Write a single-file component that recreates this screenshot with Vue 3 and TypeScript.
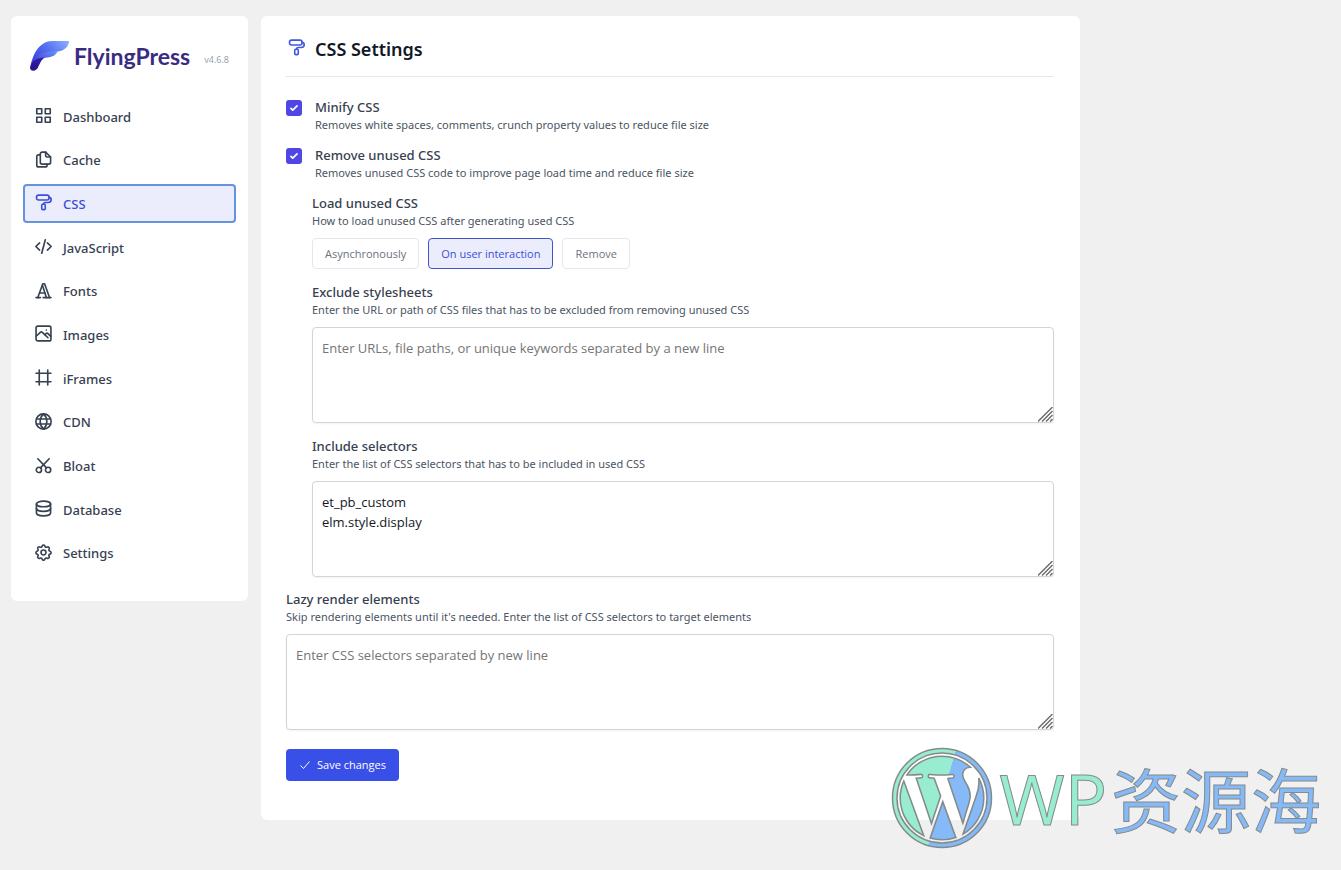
<script setup lang="ts">
import { ref } from 'vue'

interface NavItem {
  name: string
  paths: string[]
}

const roller = [
  'M5 1.500h12a2.800 2.800 0 0 1 2.800 2.800v1.400a2.800 2.800 0 0 1-2.800 2.800H5a2.800 2.800 0 0 1-2.800-2.800V4.300A2.800 2.800 0 0 1 5 1.500z',
  'M19.800 4.500c2.200.2 3.200 1.700 3 4-.2 2.400-1.700 3.500-4.300 3.500h-4c-1.700 0-2.500 1-2.500 2.500',
  'M11 14.500h2a1.500 1.500 0 0 1 1.500 1.500v4.500a1.500 1.500 0 0 1-1.500 1.500h-2a1.500 1.500 0 0 1-1.500-1.500V16a1.500 1.500 0 0 1 1.500-1.500z',
]

const items: NavItem[] = [
  {
    name: 'Dashboard',
    paths: ['M2.500 2.500h7v7h-7z', 'M14.500 2.500h7v7h-7z', 'M2.500 14.500h7v7h-7z', 'M14.500 14.500h7v7h-7z'],
  },
  {
    name: 'Cache',
    paths: [
      'M15 1.500H10a2.500 2.500 0 0 0-2.500 2.500v12a2.500 2.500 0 0 0 2.500 2.500h9.500A2.500 2.500 0 0 0 22 16V8.500z',
      'M15 1.500v5a2 2 0 0 0 2 2h5',
      'M7.500 5.500H5A2.500 2.500 0 0 0 2.500 8v12A2.500 2.500 0 0 0 5 22.500h9.500a2.500 2.500 0 0 0 2.500-2.500v-1.500',
    ],
  },
  { name: 'CSS', paths: roller },
  { name: 'JavaScript', paths: ['M6.500 7 1.200 12l5.300 5', 'M17.500 7l5.300 5-5.300 5', 'M14.500 2.500l-5 19'] },
  {
    name: 'Fonts',
    paths: ['M1.500 22h6', 'M11.500 22h11', 'M4 22 11 2.500h2.500L20.500 22', 'M10.500 4.500 16 22', 'M6.500 15.500h7.500'],
  },
  {
    name: 'Images',
    paths: [
      'M4 1.500h16A2.500 2.500 0 0 1 22.500 4v16a2.500 2.500 0 0 1-2.500 2.500H4A2.500 2.500 0 0 1 1.500 20V4A2.500 2.500 0 0 1 4 1.500z',
      'M2 15.500l5.500-5.200a2 2 0 0 1 2.800 0l8 7.700',
      'M14 13.500l1.500-1.300a2 2 0 0 1 2.800 0l4 3.800',
      'M16 7h.1',
    ],
  },
  { name: 'iFrames', paths: ['M6 1.500v21', 'M18 1.500v21', 'M1.500 6h21', 'M1.500 18h21'] },
  {
    name: 'CDN',
    paths: [
      'M12 1.200a10.800 10.800 0 1 0 0 21.600 10.800 10.800 0 0 0 0-21.600z',
      'M12 1.200c-6.300 6-6.300 15.600 0 21.600 6.300-6 6.300-15.600 0-21.600z',
      'M2.200 8.500h19.600',
      'M2.200 15.500h19.600',
    ],
  },
  {
    name: 'Bloat',
    paths: [
      'M5.500 14.500a3.700 3.700 0 1 0 0 7.400 3.700 3.700 0 0 0 0-7.400z',
      'M18.500 14.500a3.700 3.700 0 1 0 0 7.400 3.700 3.700 0 0 0 0-7.400z',
      'M4 2.500l12.300 12.800',
      'M20 2.500 7.700 15.300',
    ],
  },
  {
    name: 'Database',
    paths: [
      'M12 1.500c5.500 0 10 1.800 10 4s-4.500 4-10 4-10-1.800-10-4 4.500-4 10-4z',
      'M2 5.500v13c0 2.200 4.500 4 10 4s10-1.800 10-4v-13',
      'M2 12c0 2.200 4.500 4 10 4s10-1.800 10-4',
    ],
  },
  {
    name: 'Settings',
    paths: [
      'M12 8.500a3.500 3.500 0 1 0 0 7 3.500 3.500 0 0 0 0-7z',
      'M10.200 2.600a2 2 0 0 1 3.600 0l.5 1a1.800 1.800 0 0 0 2.200.9l1.100-.4a2 2 0 0 1 2.500 2.500l-.4 1.100a1.800 1.800 0 0 0 .9 2.200l1 .5a2 2 0 0 1 0 3.600l-1 .5a1.800 1.800 0 0 0-.9 2.200l.4 1.100a2 2 0 0 1-2.500 2.500l-1.100-.4a1.800 1.800 0 0 0-2.200.9l-.5 1a2 2 0 0 1-3.600 0l-.5-1a1.800 1.800 0 0 0-2.200-.9l-1.100.4a2 2 0 0 1-2.500-2.500l.4-1.100a1.800 1.800 0 0 0-.9-2.200l-1-.5a2 2 0 0 1 0-3.600l1-.5a1.800 1.800 0 0 0 .9-2.200l-.4-1.100a2 2 0 0 1 2.500-2.500l1.100.4a1.800 1.800 0 0 0 2.200-.9z',
    ],
  },
]

const active = ref('CSS')
const minify = ref(true)
const removeUnused = ref(true)
const modes = ['Asynchronously', 'On user interaction', 'Remove']
const mode = ref('On user interaction')
const exclude = ref('')
const include = ref('et_pb_custom\nelm.style.display')
const lazy = ref('')
</script>

<template>
  <div class="page">
    <aside class="card sidebar">
      <div class="brand">
        <svg class="bird" viewBox="0 0 40 30" aria-hidden="true">
          <defs>
            <linearGradient id="wing" x1="0" y1="0.6" x2="1" y2="0">
              <stop offset="0" stop-color="#3a43e0" />
              <stop offset="0.5" stop-color="#5876f3" />
              <stop offset="1" stop-color="#8fb0fd" />
            </linearGradient>
            <linearGradient id="mid" x1="0" y1="1" x2="1" y2="0">
              <stop offset="0" stop-color="#2f2bd0" />
              <stop offset="1" stop-color="#6d94fa" />
            </linearGradient>
            <linearGradient id="tail" x1="0" y1="1" x2="1" y2="0">
              <stop offset="0" stop-color="#2c0f86" />
              <stop offset="1" stop-color="#3420b4" />
            </linearGradient>
          </defs>
          <path d="M.5 24C3 15 6 8 12 3.500 16 .8 18 0 22 0h17c0 5-4 9.500-11 10.500C18 12 8 13 2 22z" fill="url(#wing)" />
          <path d="M1 23.500C5 13 13 10.800 27.500 10.300c-1.500 4-5 5.700-10 6.200C12 17 8 18 5 24z" fill="url(#mid)" />
          <path d="M0 26.500c1-6 7-10 15-10-3.500 2-4.500 4.500-7 10-1.500 4-8 4.500-8 0z" fill="url(#tail)" />
        </svg>
        <span class="wordmark">FlyingPress</span>
        <span class="version">v4.6.8</span>
      </div>
      <nav class="nav" aria-label="Settings sections">
        <button
          v-for="item in items"
          :key="item.name"
          type="button"
          class="nav-item"
          :class="{ active: item.name === active }"
          @click="active = item.name"
        >
          <svg class="icon" viewBox="0 0 24 24" aria-hidden="true">
            <path v-for="d in item.paths" :key="d" :d="d" />
          </svg>
          <span>{{ item.name }}</span>
        </button>
      </nav>
    </aside>

    <main class="card panel">
      <header class="panel-head">
        <svg class="icon" viewBox="0 0 24 24" aria-hidden="true">
          <path v-for="d in roller" :key="d" :d="d" />
        </svg>
        <h1>CSS Settings</h1>
      </header>

      <form class="form" @submit.prevent>
        <div class="check-row">
          <input id="minify" v-model="minify" type="checkbox" />
          <div>
            <label for="minify">Minify CSS</label>
            <p>Removes white spaces, comments, crunch property values to reduce file size</p>
          </div>
        </div>
        <div class="check-row">
          <input id="unused" v-model="removeUnused" type="checkbox" />
          <div>
            <label for="unused">Remove unused CSS</label>
            <p>Removes unused CSS code to improve page load time and reduce file size</p>
          </div>
        </div>

        <div class="nested">
          <div>
            <h2 id="load-label">Load unused CSS</h2>
            <p>How to load unused CSS after generating used CSS</p>
            <div class="modes" role="group" aria-labelledby="load-label">
              <button
                v-for="m in modes"
                :key="m"
                type="button"
                class="mode"
                :class="{ chosen: m === mode }"
                :aria-pressed="m === mode"
                @click="mode = m"
              >
                {{ m }}
              </button>
            </div>
          </div>
          <div>
            <label for="exclude">Exclude stylesheets</label>
            <p>Enter the URL or path of CSS files that has to be excluded from removing unused CSS</p>
            <div class="area">
              <textarea
                id="exclude"
                v-model="exclude"
                placeholder="Enter URLs, file paths, or unique keywords separated by a new line"
              ></textarea>
              <svg class="grip" viewBox="0 0 15 15" aria-hidden="true">
                <path d="M0 14.500 14.500 0M4 14.500 14.500 4M8 14.500 14.500 8M12 14.500 14.500 12" />
              </svg>
            </div>
          </div>
          <div>
            <label for="include">Include selectors</label>
            <p>Enter the list of CSS selectors that has to be included in used CSS</p>
            <div class="area">
              <textarea id="include" v-model="include" spellcheck="false"></textarea>
              <svg class="grip" viewBox="0 0 15 15" aria-hidden="true">
                <path d="M0 14.500 14.500 0M4 14.500 14.500 4M8 14.500 14.500 8M12 14.500 14.500 12" />
              </svg>
            </div>
          </div>
        </div>

        <div>
          <label for="lazy">Lazy render elements</label>
          <p>Skip rendering elements until it's needed. Enter the list of CSS selectors to target elements</p>
          <div class="area">
            <textarea id="lazy" v-model="lazy" placeholder="Enter CSS selectors separated by new line"></textarea>
            <svg class="grip" viewBox="0 0 15 15" aria-hidden="true">
              <path d="M0 14.500 14.500 0M4 14.500 14.500 4M8 14.500 14.500 8M12 14.500 14.500 12" />
            </svg>
          </div>
        </div>

        <button type="submit" class="save">
          <svg viewBox="0 0 12 12" aria-hidden="true"><path d="M1.500 6.500 4.500 9.500 10.500 2.500" /></svg>
          <span>Save changes</span>
        </button>
      </form>
    </main>

    <div class="watermark">
      <svg viewBox="-51 -51 102 102" aria-hidden="true">
        <defs>
          <linearGradient id="split" gradientUnits="userSpaceOnUse" x1="-48" y1="-14" x2="48" y2="14">
            <stop offset="0.5" stop-color="#98edd0" />
            <stop offset="0.5" stop-color="#85b9f8" />
          </linearGradient>
        </defs>
        <path
          class="ring"
          fill="url(#split)"
          fill-rule="evenodd"
          d="M0-49.500a49.500 49.500 0 1 0 0 99 49.500 49.500 0 0 0 0-99zM0-45a45 45 0 1 1 0 90 45 45 0 0 1 0-90z"
        />
        <svg x="-46.500" y="-46.500" width="93" height="93" viewBox="0 0 24 24">
          <defs>
            <linearGradient id="splitInner" gradientUnits="userSpaceOnUse" x1="0" y1="8.500" x2="24" y2="15.500">
              <stop offset="0.5" stop-color="#98edd0" />
              <stop offset="0.5" stop-color="#85b9f8" />
            </linearGradient>
          </defs>
          <path
            class="mark"
            fill="url(#splitInner)"
            d="M21.469 6.825c.84 1.537 1.318 3.3 1.318 5.175 0 3.979-2.156 7.456-5.363 9.325l3.295-9.527c.615-1.54.82-2.771.82-3.864 0-.405-.026-.78-.07-1.11m-7.981.105c.647-.03 1.232-.105 1.232-.105.582-.075.514-.93-.067-.899 0 0-1.755.135-2.88.135-1.064 0-2.85-.15-2.85-.15-.585-.03-.661.855-.075.885 0 0 .54.061 1.125.09l1.68 4.605-2.37 7.08L5.354 6.9c.649-.03 1.234-.1 1.234-.1.585-.075.516-.93-.065-.896 0 0-1.746.138-2.874.138-.2 0-.438-.008-.69-.015C4.911 3.15 8.235 1.215 12 1.215c2.809 0 5.365 1.072 7.286 2.833-.046-.003-.091-.009-.141-.009-1.06 0-1.812.923-1.812 1.914 0 .89.513 1.643 1.06 2.531.411.72.89 1.643.89 2.977 0 .915-.354 1.994-.821 3.479l-1.075 3.585-3.9-11.61.001.014zM12 22.784c-1.059 0-2.081-.153-3.048-.437l3.237-9.406 3.315 9.087c.024.053.05.101.078.149-1.12.393-2.325.609-3.582.609M1.211 12c0-1.564.336-3.05.935-4.39L7.29 21.709C3.694 19.96 1.212 16.271 1.211 12"
          />
        </svg>
      </svg>
      <span class="wp">WP</span>
      <span class="hanzi">资源海</span>
    </div>
  </div>
</template>

<style>
body {
  margin: 0;
  background: #f0f0f0;
}
</style>

<style scoped>
* {
  box-sizing: border-box;
}
.page {
  position: relative;
  display: flex;
  align-items: flex-start;
  gap: 13px;
  min-height: 100vh;
  padding: 16px 11px;
  font-family: 'Noto Sans', 'Open Sans', sans-serif;
  color: #374151;
}
.card {
  background: #fff;
  border-radius: 6px;
}
.sidebar {
  flex: 0 0 237px;
  padding: 20px 12px 28px;
}
.brand {
  display: flex;
  align-items: center;
  height: 40px;
  padding: 0 7px;
}
.bird {
  width: 40px;
  height: 30px;
}
.wordmark {
  margin-left: 4px;
  font: 700 23px/30px Lato, sans-serif;
  color: #3a2b82;
}
.version {
  margin: 8px 0 0 auto;
  font-size: 9px;
  line-height: 14px;
  color: #9ca3af;
}
.nav {
  display: flex;
  flex-direction: column;
  justify-content: space-between;
  min-height: 476px;
  margin-top: 21px;
}
.nav-item {
  display: flex;
  align-items: center;
  gap: 11px;
  height: 39px;
  padding: 0 12px;
  border: 0;
  border-radius: 4px;
  background: none;
  font: 500 13px/20px 'Noto Sans', sans-serif;
  color: #374151;
  text-align: left;
}
.nav-item .icon {
  margin-bottom: 2px;
}
.nav-item.active {
  background: #ecedfc;
  box-shadow: inset 0 0 0 2px #6593e0;
  color: #3b50d8;
}
.icon {
  width: 17px;
  height: 17px;
  fill: none;
  stroke: currentColor;
  stroke-width: 2.3;
  stroke-linecap: round;
  stroke-linejoin: round;
}
.panel {
  flex: 0 1 819px;
  min-width: 0;
  padding: 20px 26px 39px 25px;
}
.panel-head {
  display: flex;
  align-items: center;
  gap: 10px;
  height: 41px;
  padding: 0 2px 18px;
  border-bottom: 1px solid #e5e7eb;
}
.panel-head .icon {
  color: #4158dc;
}
h1 {
  margin: 4px 0 0;
  font-size: 18px;
  line-height: 26px;
  font-weight: 600;
  color: #111827;
}
.form {
  display: flex;
  flex-direction: column;
  gap: 13px;
  margin-top: 21px;
}
.check-row {
  display: flex;
  gap: 13px;
}
input[type='checkbox'] {
  appearance: none;
  flex: none;
  width: 16px;
  height: 16px;
  margin: 2px 0 0;
  border-radius: 3px;
  background: #e5e7eb;
}
input[type='checkbox']:checked {
  background: #4f46e5
    url("data:image/svg+xml,%3Csvg viewBox='0 0 16 16' fill='white' xmlns='http://www.w3.org/2000/svg'%3E%3Cpath d='M12.207 4.793a1 1 0 010 1.414l-5 5a1 1 0 01-1.414 0l-2-2a1 1 0 011.414-1.414L6.500 9.086l4.293-4.293a1 1 0 011.414 0z'/%3E%3C/svg%3E")
    center / 14px no-repeat;
}
label,
h2 {
  display: block;
  margin: 0;
  font-size: 13px;
  line-height: 18px;
  font-weight: 500;
  color: #374151;
}
p {
  margin: 0;
  font-size: 11px;
  line-height: 17px;
  color: #4b5563;
}
.nested {
  display: flex;
  flex-direction: column;
  gap: 14px;
  padding-left: 26px;
}
.modes {
  display: flex;
  flex-wrap: wrap;
  gap: 9px;
  margin-top: 9px;
}
.mode {
  height: 31px;
  padding: 0 12px;
  border: 1px solid #e5e7eb;
  border-radius: 4px;
  background: #fff;
  font: 500 11px/16px 'Open Sans', sans-serif;
  color: #6b7280;
}
.mode.chosen {
  border-color: #4054cc;
  background: #ecedfc;
  color: #3b50d8;
}
.area {
  position: relative;
  margin-top: 9px;
}
textarea {
  display: block;
  width: 100%;
  height: 96px;
  padding: 10px 9px;
  border: 1px solid #d1d5db;
  border-radius: 4px;
  box-shadow: 0 1px 2px rgba(0, 0, 0, 0.05);
  background: #fff;
  font: 400 13px/20px 'Open Sans', sans-serif;
  color: #111827;
  resize: none;
}
textarea::placeholder {
  color: #757575;
}
.grip {
  position: absolute;
  right: 1px;
  bottom: 1px;
  width: 15px;
  height: 15px;
  fill: none;
  stroke: #6a6a6a;
  stroke-width: 1.4;
  pointer-events: none;
}
.save {
  display: flex;
  align-items: center;
  align-self: flex-start;
  gap: 6px;
  height: 32px;
  margin-top: 6px;
  padding: 0 13px;
  border: 0;
  border-radius: 4px;
  background: #384fe8;
  font: 500 11px/16px 'Open Sans', sans-serif;
  color: #fff;
}
.save svg {
  width: 12px;
  height: 12px;
  fill: none;
  stroke: #fff;
  stroke-width: 1;
}
.watermark {
  position: absolute;
  right: 20px;
  bottom: 20px;
  display: flex;
  align-items: center;
  height: 104px;
  white-space: nowrap;
  font-size: 70px;
  line-height: 100px;
  -webkit-text-stroke: 1px #858b8b;
  pointer-events: none;
}
.watermark > svg {
  width: 102px;
  height: 102px;
}
.ring {
  stroke: #858b8b;
  stroke-width: 1.5;
}
.mark {
  stroke: #858b8b;
  stroke-width: 0.4;
}
.wp {
  margin-left: 7px;
  font-family: 'Noto Sans', sans-serif;
  color: #98edd0;
}
.hanzi {
  margin-left: 4px;
  font-family: 'Noto Sans CJK SC', sans-serif;
  color: #85b9f8;
}
</style>
